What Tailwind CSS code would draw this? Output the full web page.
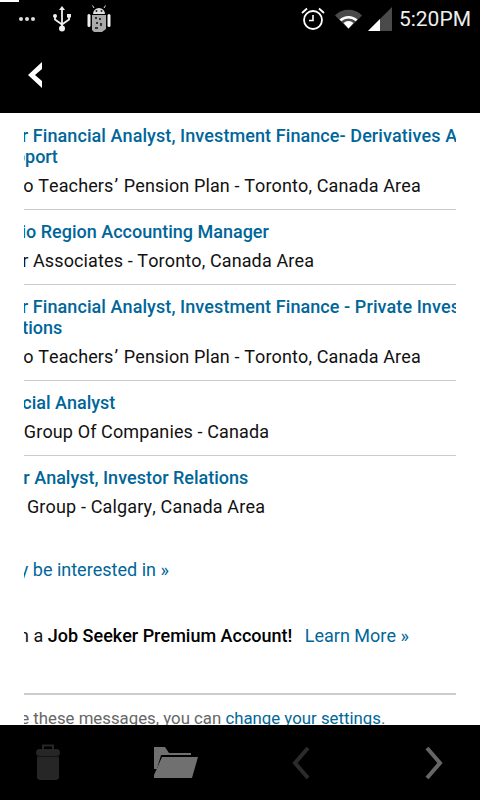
<!DOCTYPE html>
<html lang="en">
<head>
  <meta charset="UTF-8">
  <meta name="viewport" content="width=device-width, initial-scale=1.0">
  <script src="https://cdn.jsdelivr.net/npm/@tailwindcss/browser@4"></script>
  <title>Job alerts</title>
</head>
<body class="w-[480px] h-[800px] overflow-hidden flex flex-col bg-white font-['Roboto',sans-serif] [font-kerning:none]">

  <!-- Status bar -->
  <div class="relative h-[38px] shrink-0 bg-black flex items-center text-white">
    <div class="absolute left-0 top-0 w-[19px] h-[2px] bg-white"></div>
    <div class="flex gap-[2px] ml-[19px] w-[16px]">
      <span class="w-[4px] h-[4px] rounded-full bg-[#ddd]"></span>
      <span class="w-[4px] h-[4px] rounded-full bg-[#ddd]"></span>
      <span class="w-[4px] h-[4px] rounded-full bg-[#ddd]"></span>
    </div>
    <svg class="ml-[17px]" width="20" height="26" viewBox="0 0 20 26" fill="none" stroke="#eee" stroke-width="1.8">
      <path d="M10 4V22M3 11v2.5l7 5M17 10v3.5l-7 5"/>
      <path d="M10 0l3 4H7z" fill="#eee" stroke="none"/>
      <circle cx="10" cy="22.5" r="3" fill="#eee" stroke="none"/>
      <circle cx="3" cy="10" r="2" fill="#eee" stroke="none"/>
      <rect x="15" y="8" width="4" height="3.5" fill="#eee" stroke="none"/>
    </svg>
    <svg class="ml-[15px]" width="24" height="28" viewBox="0 0 24 28">
      <path d="M6 9a6 6 0 0 1 12 0z" fill="#ddd"/>
      <path d="M7 3L5.5 0.5M17 3l1.5-2.5" stroke="#ddd" stroke-width="1"/>
      <circle cx="9.500" cy="6" r="1" fill="#222"/>
      <circle cx="14.500" cy="6" r="1" fill="#222"/>
      <rect x="0.500" y="9" width="3" height="13" rx="1.500" fill="#eee"/>
      <rect x="20.500" y="9" width="3" height="13" rx="1.500" fill="#eee"/>
      <path d="M5 10h14v14l-4 3H7l-2-2z" fill="#aaa"/>
      <path d="M8 12h2v2H8zM12 13h2v2h-2zM9 17h2v2H9zM13 18h2v3h-2zM8 22h3v2H8z" fill="#333"/>
    </svg>
    <div class="ml-auto flex items-center">
      <svg width="26" height="26" viewBox="0 0 26 26" fill="none" stroke="#fff" stroke-width="1.800">
        <circle cx="13" cy="14" r="9"/>
        <path d="M13 9v5.500H9" stroke-width="1.600"/>
        <path d="M2 7l5-4.500M24 7l-5-4.500"/>
      </svg>
      <svg class="ml-[9px]" width="27" height="20" viewBox="0 0 27 20">
        <path d="M0 6.500A19 19 0 0 1 27 6.500L13.500 20z" fill="#4a4a4a"/>
        <path d="M4.500 10.500a13 13 0 0 1 18 0l-1.800 1.800a10.500 10.500 0 0 0-14.400 0z" fill="#fff"/>
        <path d="M8.500 14a7.500 7.500 0 0 1 10 0l-5 5.500z" fill="#fff"/>
      </svg>
      <svg class="ml-[6px]" width="24" height="24" viewBox="0 0 24 24">
        <path d="M0 24L24 0V24z" fill="#4a4a4a"/>
        <path d="M0 24L12 12V24z" fill="#fff"/>
      </svg>
      <span class="ml-[7px] mr-[9px] text-[21px] leading-none text-[#eee]">5:20PM</span>
    </div>
  </div>

  <!-- Action bar -->
  <div class="h-[75px] shrink-0 bg-black flex items-center pl-[28px] pb-[2px]">
    <svg width="14" height="26" viewBox="0 0 14 26"><path d="M14 0V7L7 13l7 6v7L0 13z" fill="#fff"/></svg>
  </div>

  <!-- Message body, cut off on both sides -->
  <div class="flex-1 min-h-0 overflow-hidden mx-[24px] text-[18px] whitespace-nowrap">
    <div class="border-b border-[#ccc] pb-[12px] pt-[12px]">
      <p class="ml-[-48px] font-medium tracking-[0.08px] text-[#006699] leading-[21px]">Senior Financial Analyst, Investment Finance- Derivatives Analyst</p>
      <p class="ml-[-30px] font-medium text-[#006699] leading-[21px]">Support</p>
      <p class="ml-[-50px] mt-[8px] leading-[22px] tracking-[0.12px] text-[#111]">Ontario Teachers<span class="mx-[1px]">’</span> Pension Plan - Toronto, Canada Area</p>
    </div>
    <div class="border-b border-[#ccc] pb-[12px] pt-[11px]">
      <p class="ml-[-47px] font-medium text-[#006699] leading-[21px]">Ontario Region Accounting Manager</p>
      <p class="ml-[-48px] mt-[8px] leading-[22px] tracking-[0.12px] text-[#111]">Walter Associates - Toronto, Canada Area</p>
    </div>
    <div class="border-b border-[#ccc] pb-[12px] pt-[11px]">
      <p class="ml-[-48px] font-medium tracking-[0.08px] text-[#006699] leading-[21px]">Senior Financial Analyst, Investment Finance - Private Investments</p>
      <p class="ml-[-50px] font-medium text-[#006699] leading-[21px]">Operations</p>
      <p class="ml-[-50px] mt-[8px] leading-[22px] tracking-[0.12px] text-[#111]">Ontario Teachers<span class="mx-[1px]">’</span> Pension Plan - Toronto, Canada Area</p>
    </div>
    <div class="border-b border-[#ccc] pb-[12px] pt-[11px]">
      <p class="ml-[-46px] font-medium text-[#006699] leading-[21px]">Financial Analyst</p>
      <p class="ml-[-77px] mt-[8px] leading-[22px] tracking-[0.12px] text-[#111]">Mattamy Group Of Companies - Canada</p>
    </div>
    <div class="pt-[11px]">
      <p class="ml-[-46px] font-medium text-[#006699] leading-[21px]">Senior Analyst, Investor Relations</p>
      <p class="ml-[-85px] mt-[8px] leading-[22px] tracking-[0.16px] text-[#111]">Brookfield Group - Calgary, Canada Area</p>
    </div>
    <p class="ml-[-107px] mt-[41px] leading-[22px] text-[#006699]">Jobs you may be interested in »</p>
    <p class="ml-[-62px] mt-[44px] leading-[22px] text-[#111]">Invest in a <span class="font-medium text-black">Job Seeker Premium Account!</span> <a class="ml-[8px] text-[#006699]">Learn More »</a></p>
    <div class="mt-[46px] h-[2px] bg-[#ccc]"></div>
    <p class="mt-[13px] ml-[-110px] text-[16.8px] leading-[20px] text-[#666]">To unsubscribe these messages, you can <a class="text-[#006699]">change your settings</a>.</p>
  </div>

  <!-- Bottom toolbar -->
  <div class="h-[75px] shrink-0 bg-black relative">
    <svg class="absolute left-[35px] top-[19px]" width="26" height="37" viewBox="0 0 26 37" fill="#262626">
      <path d="M8 6V1.500h10V6" fill="none" stroke="#262626" stroke-width="2"/>
      <rect x="1" y="5" width="24" height="7" rx="3.500"/>
      <path d="M2 12.500h22V33a3 3 0 0 1-3 3H5a3 3 0 0 1-3-3z"/>
    </svg>
    <svg class="absolute left-[154px] top-[22px]" width="44" height="31" viewBox="0 0 44 31" fill="#707070">
      <path d="M0 0h11l4 6h22v2H7L3 22H0z"/>
      <path d="M8 10h36l-6 21H0v-3z"/>
    </svg>
    <svg class="absolute left-[292px] top-[21px]" width="18" height="34" viewBox="0 0 18 34" fill="none" stroke="#2b2b2b" stroke-width="4"><path d="M16 2L3 17l13 15"/></svg>
    <svg class="absolute left-[425px] top-[21px]" width="18" height="34" viewBox="0 0 18 34" fill="none" stroke="#666" stroke-width="4"><path d="M2 2l13 15L2 32"/></svg>
  </div>
</body>
</html>
